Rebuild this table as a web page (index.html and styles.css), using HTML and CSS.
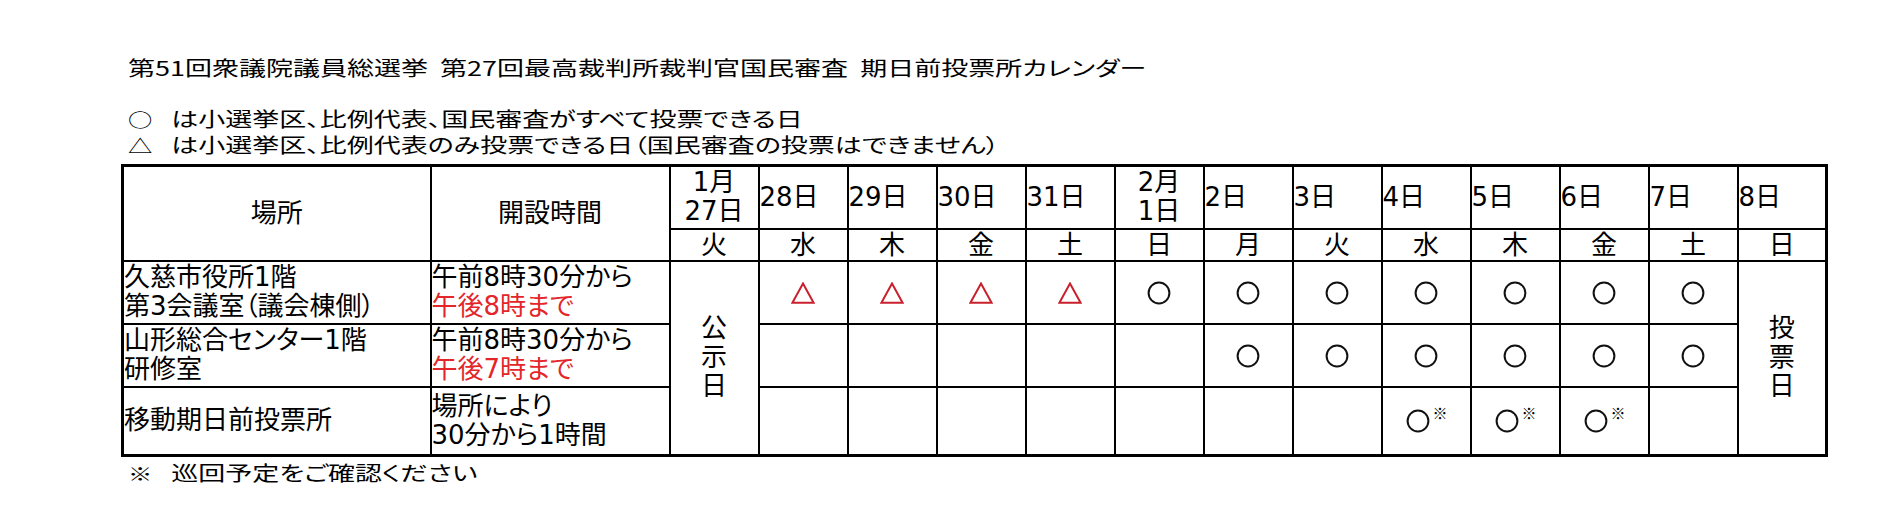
FILE: index.html
```html
<!DOCTYPE html>
<html lang="ja">
<head>
<meta charset="utf-8">
<title>期日前投票所カレンダー</title>
<link rel="stylesheet" href="styles.css">
</head>
<body>
<div class="page">
  <h1 class="title"><span class="wide">第51回衆議院議員総選挙  第27回最高裁判所裁判官国民審査  期日前投票所カレンダー</span></h1>
  <p class="legend legend-first"><span class="wide"><span class="sym">○</span>は小選挙区、比例代表、国民審査がすべて投票できる日</span></p>
  <p class="legend"><span class="wide"><span class="sym">△</span>は小選挙区、比例代表のみ投票できる日（国民審査の投票はできません）</span></p>
  <table class="cal">
    <colgroup>
      <col class="c-place">
      <col class="c-time">
      <col class="c-day" span="13">
    </colgroup>
    <thead>
      <tr class="r-date">
        <th rowspan="2" class="hd">場所</th>
        <th rowspan="2" class="hd">開設時間</th>
        <th class="dt two">1月<br>27日</th>
        <th class="dt">28日</th>
        <th class="dt">29日</th>
        <th class="dt">30日</th>
        <th class="dt">31日</th>
        <th class="dt two">2月<br>1日</th>
        <th class="dt">2日</th>
        <th class="dt">3日</th>
        <th class="dt">4日</th>
        <th class="dt">5日</th>
        <th class="dt">6日</th>
        <th class="dt">7日</th>
        <th class="dt">8日</th>
      </tr>
      <tr class="r-wd">
        <th class="wd">火</th>
        <th class="wd">水</th>
        <th class="wd">木</th>
        <th class="wd">金</th>
        <th class="wd">土</th>
        <th class="wd">日</th>
        <th class="wd">月</th>
        <th class="wd">火</th>
        <th class="wd">水</th>
        <th class="wd">木</th>
        <th class="wd">金</th>
        <th class="wd">土</th>
        <th class="wd">日</th>
      </tr>
    </thead>
    <tbody>
      <tr class="r-1">
        <td class="txt">久慈市役所1階<br>第3会議室（議会棟側）</td>
        <td class="txt">午前8時30分から<br><span class="red">午後8時まで</span></td>
        <td rowspan="3" class="vert">公<br>示<br>日</td>
        <td class="mk"><svg class="tri" viewBox="0 0 24 22" width="24" height="22"><polygon points="12,1.5 22.6,20.8 1.4,20.8"/></svg></td>
        <td class="mk"><svg class="tri" viewBox="0 0 24 22" width="24" height="22"><polygon points="12,1.5 22.6,20.8 1.4,20.8"/></svg></td>
        <td class="mk"><svg class="tri" viewBox="0 0 24 22" width="24" height="22"><polygon points="12,1.5 22.6,20.8 1.4,20.8"/></svg></td>
        <td class="mk"><svg class="tri" viewBox="0 0 24 22" width="24" height="22"><polygon points="12,1.5 22.6,20.8 1.4,20.8"/></svg></td>
        <td class="mk"><svg class="cir" viewBox="0 0 24 24" width="24" height="24"><circle cx="12" cy="12" r="10.4"/></svg></td>
        <td class="mk"><svg class="cir" viewBox="0 0 24 24" width="24" height="24"><circle cx="12" cy="12" r="10.4"/></svg></td>
        <td class="mk"><svg class="cir" viewBox="0 0 24 24" width="24" height="24"><circle cx="12" cy="12" r="10.4"/></svg></td>
        <td class="mk"><svg class="cir" viewBox="0 0 24 24" width="24" height="24"><circle cx="12" cy="12" r="10.4"/></svg></td>
        <td class="mk"><svg class="cir" viewBox="0 0 24 24" width="24" height="24"><circle cx="12" cy="12" r="10.4"/></svg></td>
        <td class="mk"><svg class="cir" viewBox="0 0 24 24" width="24" height="24"><circle cx="12" cy="12" r="10.4"/></svg></td>
        <td class="mk"><svg class="cir" viewBox="0 0 24 24" width="24" height="24"><circle cx="12" cy="12" r="10.4"/></svg></td>
        <td rowspan="3" class="vert">投<br>票<br>日</td>
      </tr>
      <tr class="r-2">
        <td class="txt">山形総合センター1階<br>研修室</td>
        <td class="txt">午前8時30分から<br><span class="red">午後7時まで</span></td>
        <td class="mk"></td>
        <td class="mk"></td>
        <td class="mk"></td>
        <td class="mk"></td>
        <td class="mk"></td>
        <td class="mk"><svg class="cir" viewBox="0 0 24 24" width="24" height="24"><circle cx="12" cy="12" r="10.4"/></svg></td>
        <td class="mk"><svg class="cir" viewBox="0 0 24 24" width="24" height="24"><circle cx="12" cy="12" r="10.4"/></svg></td>
        <td class="mk"><svg class="cir" viewBox="0 0 24 24" width="24" height="24"><circle cx="12" cy="12" r="10.4"/></svg></td>
        <td class="mk"><svg class="cir" viewBox="0 0 24 24" width="24" height="24"><circle cx="12" cy="12" r="10.4"/></svg></td>
        <td class="mk"><svg class="cir" viewBox="0 0 24 24" width="24" height="24"><circle cx="12" cy="12" r="10.4"/></svg></td>
        <td class="mk"><svg class="cir" viewBox="0 0 24 24" width="24" height="24"><circle cx="12" cy="12" r="10.4"/></svg></td>
      </tr>
      <tr class="r-3">
        <td class="txt">移動期日前投票所</td>
        <td class="txt">場所により<br>30分から1時間</td>
        <td class="mk"></td>
        <td class="mk"></td>
        <td class="mk"></td>
        <td class="mk"></td>
        <td class="mk"></td>
        <td class="mk"></td>
        <td class="mk"></td>
        <td class="mk"><span class="mob"><svg class="cir" viewBox="0 0 24 24" width="24" height="24"><circle cx="12" cy="12" r="10.4"/></svg><span class="kome">※</span></span></td>
        <td class="mk"><span class="mob"><svg class="cir" viewBox="0 0 24 24" width="24" height="24"><circle cx="12" cy="12" r="10.4"/></svg><span class="kome">※</span></span></td>
        <td class="mk"><span class="mob"><svg class="cir" viewBox="0 0 24 24" width="24" height="24"><circle cx="12" cy="12" r="10.4"/></svg><span class="kome">※</span></span></td>
        <td class="mk"></td>
      </tr>
    </tbody>
  </table>
  <p class="note"><span class="wide"><span class="sym">※</span>巡回予定をご確認ください</span></p>
</div>
</body>
</html>
```

FILE: styles.css
```css
html, body {
  margin: 0;
  padding: 0;
  background: #ffffff;
}

body {
  font-family: "Noto Sans CJK JP", "Noto Sans", sans-serif;
  font-feature-settings: "palt" 1;
  color: #000000;
}

.page {
  padding: 54px 0 0 121px;
}

.title {
  margin: 0;
  padding-left: 7px;
  font-size: 20px;
  font-weight: 400;
  line-height: 28px;
}

.legend {
  margin: 0;
  padding-left: 7px;
  font-size: 20px;
  line-height: 26px;
}

.legend-first {
  margin-top: 24px;
}

.wide {
  display: inline-block;
  white-space: pre;
  transform: scaleX(1.35);
  transform-origin: left center;
}

.sym {
  display: inline-block;
  width: 32px;
  font-size: 18px;
  font-feature-settings: normal;
  text-align: left;
}

.cal {
  margin-top: 6px;
  width: 1704px;
  table-layout: fixed;
  border-collapse: collapse;
  border: 3px solid #000000;
  font-family: "DejaVu Sans", "Noto Sans CJK JP", sans-serif;
  font-size: 26px;
  line-height: 29px;
}

.c-place { width: 308px; }
.c-time { width: 239px; }
.c-day { width: 89px; }

.cal th,
.cal td {
  border: 2px solid #000000;
  padding: 0;
  font-weight: 400;
  vertical-align: middle;
}

.r-date { height: 63px; }
.r-wd { height: 32px; }
.r-1 { height: 63px; }
.r-2 { height: 63px; }
.r-3 { height: 69px; }

.hd {
  text-align: center;
}

.dt {
  text-align: left;
  padding-left: 6px;
  white-space: nowrap;
}

.dt.two {
  text-align: center;
  padding-left: 0;
}

.wd {
  text-align: center;
  line-height: 28px;
}

.txt {
  text-align: left;
  padding-left: 6px;
  white-space: nowrap;
}

.red {
  color: #e3262a;
}

.vert {
  text-align: center;
  line-height: 29px;
}

.mk {
  text-align: center;
}

.mk svg {
  display: inline-block;
  vertical-align: middle;
}

.tri polygon {
  fill: none;
  stroke: #c9202c;
  stroke-width: 2;
  stroke-linejoin: miter;
}

.cir circle {
  fill: none;
  stroke: #111111;
  stroke-width: 2;
}

.mob {
  display: inline-flex;
  align-items: flex-start;
  padding-top: 6px;
  margin-left: 2px;
}

.mob .kome {
  font-family: "Noto Sans CJK JP", sans-serif;
  font-size: 15px;
  line-height: 15px;
  margin-left: 2px;
  margin-top: -4px;
}

.note {
  margin: 3px 0 0 0;
  padding-left: 7px;
  font-size: 20px;
  line-height: 26px;
}
```
